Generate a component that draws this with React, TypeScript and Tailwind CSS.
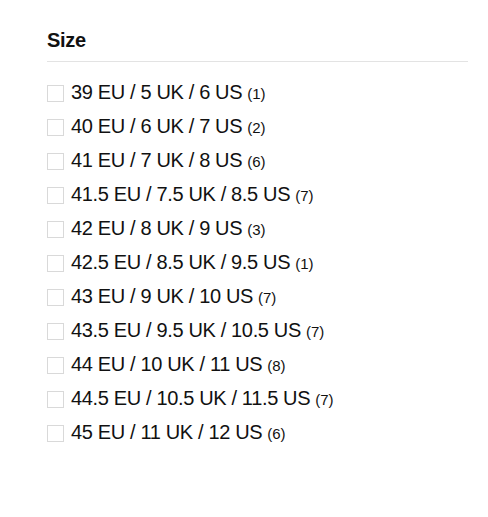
import React from 'react'

const sizes = [
  { label: '39 EU / 5 UK / 6 US', count: 1 },
  { label: '40 EU / 6 UK / 7 US', count: 2 },
  { label: '41 EU / 7 UK / 8 US', count: 6 },
  { label: '41.5 EU / 7.5 UK / 8.5 US', count: 7 },
  { label: '42 EU / 8 UK / 9 US', count: 3 },
  { label: '42.5 EU / 8.5 UK / 9.5 US', count: 1 },
  { label: '43 EU / 9 UK / 10 US', count: 7 },
  { label: '43.5 EU / 9.5 UK / 10.5 US', count: 7 },
  { label: '44 EU / 10 UK / 11 US', count: 8 },
  { label: '44.5 EU / 10.5 UK / 11.5 US', count: 7 },
  { label: '45 EU / 11 UK / 12 US', count: 6 },
]

export default function App() {
  return (
    <div
      className="w-[488px] h-[517px] bg-white pl-[47px] pr-[20px] pt-[28px] text-[#111]"
      style={{ fontFamily: '"Liberation Sans", Arial, sans-serif' }}
    >
      <div className="border-b border-[#e3e3e3] pb-[8px]">
        <h3 className="text-[20px] leading-[25px] font-bold tracking-[-0.3px]">Size</h3>
      </div>
      <ul className="mt-[14px]">
        {sizes.map((s) => (
          <li key={s.label} className="flex items-center h-[34px]">
            <span className="w-[17px] h-[17px] border border-[#d9d9d9] bg-white shrink-0" />
            <span className="ml-[7px] text-[20px] leading-[24px] tracking-[-0.35px] whitespace-nowrap">
              {s.label}
              <span className="ml-[5px] text-[15px] tracking-normal">({s.count})</span>
            </span>
          </li>
        ))}
      </ul>
    </div>
  )
}
